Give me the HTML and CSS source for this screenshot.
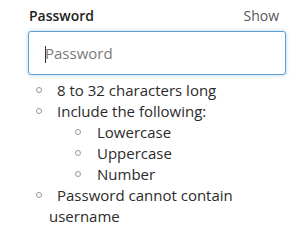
FILE: index.html
```html
<!DOCTYPE html>
<html>
<head>
<meta charset="utf-8">
<link rel="stylesheet" href="styles.css">
</head>
<body>
<div class="field">
  <div class="label-row">
    <span class="label">Password</span>
    <span class="show">Show</span>
  </div>
  <div class="input-wrap">
    <input class="input" type="password" placeholder="Password">
    <span class="caret"></span>
  </div>
  <ul class="rules">
    <li>8 to 32 characters long</li>
    <li>Include the following:
      <ul class="sub">
        <li>Lowercase</li>
        <li>Uppercase</li>
        <li>Number</li>
      </ul>
    </li>
    <li>Password cannot contain username</li>
  </ul>
</div>
</body>
</html>
```
FILE: styles.css
```css
html, body {
  margin: 0;
  padding: 0;
  background: #fff;
}
body {
  font-family: "Open Sans", "Noto Sans", sans-serif;
  color: #2b2b2b;
}
.field {
  width: 258px;
  margin-left: 28px;
}
.label-row {
  display: flex;
  justify-content: space-between;
  align-items: baseline;
  padding-top: 6px;
  line-height: 20px;
  font-size: 14px;
}
.label {
  font-weight: 600;
  color: #222;
  margin-left: 1px;
}
.show {
  color: #555;
  margin-right: 7px;
}
.input-wrap {
  position: relative;
  margin-top: 5px;
}
.input {
  display: block;
  box-sizing: border-box;
  width: 258px;
  height: 44px;
  margin: 0;
  padding: 0 0 0 16px;
  border: 1px solid #5d9fd2;
  border-radius: 3px;
  box-shadow: 0 0 4px rgba(93, 159, 210, 0.45);
  font-family: "Open Sans", "Noto Sans", sans-serif;
  font-size: 15px;
  color: #333;
  outline: none;
  background: #fff;
}
.input::placeholder {
  color: #7a7a7a;
}
.caret {
  position: absolute;
  left: 17px;
  top: 15px;
  width: 1px;
  height: 17px;
  background: #333;
}
.rules {
  list-style: none;
  margin: 5px 0 0 0;
  padding: 0 0 0 21px;
  font-size: 15px;
  line-height: 21px;
  text-indent: -13px;
}
.rules li::before {
  content: "";
  display: inline-block;
  box-sizing: border-box;
  width: 6px;
  height: 6px;
  border: 1px solid #9a9a9a;
  border-radius: 50%;
  margin-right: 15px;
  vertical-align: 3px;
}
.sub {
  list-style: none;
  margin: 0;
  padding: 0 0 0 39px;
}
.sub li::before {
  margin-right: 16px;
}
```
